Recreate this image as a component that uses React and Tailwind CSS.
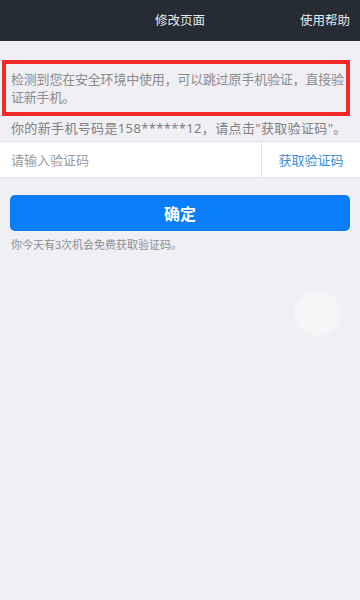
import React from "react";

const font = { fontFamily: '"Noto Sans CJK SC", "Noto Sans", sans-serif' };

export default function App() {
  return (
    <div className="relative w-[360px] h-[600px] bg-[#efeff4] overflow-hidden" style={font}>
      <header className="relative h-[41px] bg-[#252c33] flex items-center justify-center">
        <span className="text-[12.5px] text-[#e8eaec]">修改页面</span>
        <span className="absolute right-[10px] top-0 h-full flex items-center text-[12.5px] text-[#e8eaec]">
          使用帮助
        </span>
      </header>

      <div className="pt-[19px]">
        <div className="ml-[2px] mr-[10px] border-[4px] border-[#f22c2c] pl-[5px] pr-0 py-[6px] text-[13px] leading-[18px] text-[#8c8c91] whitespace-nowrap tracking-[-0.2px]">
          检测到您在安全环境中使用，可以跳过原手机验证，直接验
          <br />
          证新手机。
        </div>
        <p className="px-[11px] pt-[3px] pb-[4px] text-[13px] leading-[18px] text-[#808085] whitespace-nowrap tracking-[0.35px]">
          你的新手机号码是<span className="font-['Noto_Sans']">158******12</span>，请点击<span className="font-['Noto_Sans']">"</span>获取验证码<span className="font-['Noto_Sans']">"</span>。
        </p>
        <div className="flex h-[37px] bg-white border-t border-b border-[#e3e3e6]">
          <div className="flex-1 flex items-center pl-[11px] text-[13px] text-[#9a9a9e]">请输入验证码</div>
          <div className="w-[99px] flex items-center justify-center border-l border-[#e3e3e6] text-[13px] text-[#3a8fd8]">
            获取验证码
          </div>
        </div>
        <div className="px-[10px] pt-[17px]">
          <button className="w-full h-[36px] rounded-[5px] bg-[#0a7dfb] text-white text-[16px] font-bold">
            确定
          </button>
        </div>
        <p className="px-[11px] pt-[5px] text-[11px] leading-[16px] text-[#8e8e93]">
          你今天有3次机会免费获取验证码。
        </p>
      </div>

      <div className="absolute left-[294px] top-[290px] w-[46px] h-[46px] rounded-full bg-white/40"></div>
    </div>
  );
}
